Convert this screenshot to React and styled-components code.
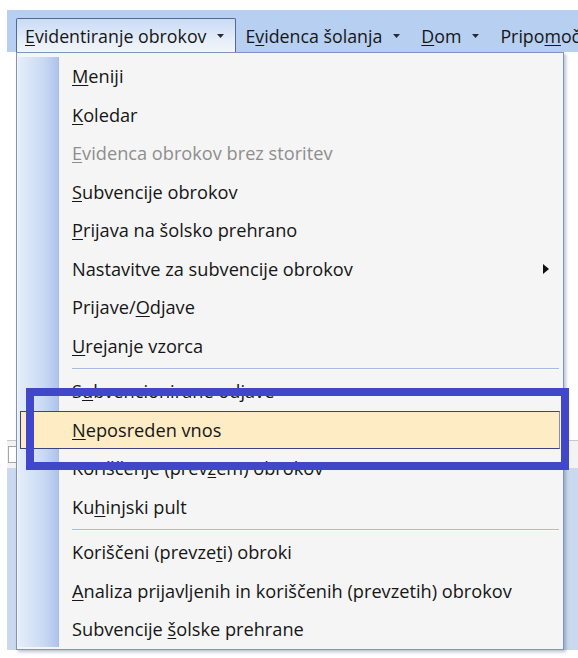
import React from 'react';
import styled, { createGlobalStyle, css } from 'styled-components';

const GlobalStyle = createGlobalStyle`
  html, body {
    margin: 0;
    background: #ffffff;
  }
  body {
    font-family: "Open Sans", "Noto Sans", "DejaVu Sans", sans-serif;
  }
`;

const Screen = styled.div`
  position: relative;
  width: 578px;
  height: 658px;
  overflow: hidden;
  background: #ffffff;
`;

const AppWindow = styled.div`
  display: flex;
  flex-direction: column;
  height: 640px;
  margin: 10px 0 0 7px;
`;

const MenuBar = styled.div`
  display: flex;
  align-items: flex-end;
  height: 42px;
  padding-left: 9px;
  background: #b7cff1;
  white-space: nowrap;
  overflow: hidden;
`;

const BarItem = styled.div`
  position: relative;
  flex-shrink: 0;
  display: flex;
  align-items: center;
  gap: 11px;
  height: 32px;
  padding: 0 11px 0 8px;
  border: 1px solid transparent;
  border-bottom: none;
  font-size: 17.8px;
  color: #161616;

  ${({ $open }) =>
    $open &&
    css`
      z-index: 3;
      height: 34px;
      margin-bottom: -1px;
      border-color: #56698f;
      border-radius: 2px 2px 0 0;
      background: linear-gradient(#c9dbf5, #e9f0fa 70%, #f5f5f5);
    `}
`;

const Key = styled.span`
  text-decoration: underline;
  text-underline-offset: 2px;
  text-decoration-thickness: 1px;
`;

const DownArrow = styled.svg`
  width: 7px;
  height: 4px;
  fill: #2a2a2a;
`;

const Workspace = styled.div`
  flex: 1;
  display: flex;
  flex-direction: column;
  background: #ffffff;
`;

const Toolbar = styled.div`
  display: flex;
  align-items: center;
  height: 27px;
  margin-top: auto;
  border-top: 1px solid #c8c8c8;
  background: #f3f3f3;
`;

const SearchBox = styled.div`
  width: 60px;
  height: 15px;
  margin-left: 1px;
  border: 1px solid #a6a6a6;
  background: #ffffff;
`;

const Panel = styled.div`
  height: 182px;
  background: #cad9ee;
`;

const Dropdown = styled.div`
  position: absolute;
  left: 16px;
  top: 52px;
  z-index: 2;
  box-sizing: border-box;
  width: 548px;
  height: 598px;
  padding: 4px 0 0;
  border: 1px solid #7f93bf;
  box-shadow: 2px 2px 3px rgba(70, 80, 100, 0.35);
  background:
    linear-gradient(to right, #e5edf9 0, #c9d9f4 26px, #aec4ec 40px, #9fb8e6 41px)
      1px 4px / 41px calc(100% - 6px) no-repeat,
    #f5f5f5;
`;

const MenuItem = styled.div`
  display: flex;
  align-items: center;
  box-sizing: border-box;
  height: 38.5px;
  margin: 0 3px;
  padding: 0 10px 0 51px;
  border: 1px solid transparent;
  font-size: 18.2px;
  white-space: nowrap;
  color: ${({ $disabled }) => ($disabled ? '#8e8e8e' : '#161616')};

  ${({ $active }) =>
    $active &&
    css`
      background: #feecc5;
      border-color: #3c4282 #8c8ca4 #3c4282 #3c4282;
    `}
`;

const SubArrow = styled.svg`
  width: 6px;
  height: 10px;
  margin-left: auto;
  fill: #111111;
`;

const Separator = styled.div`
  display: flex;
  align-items: center;
  height: 7px;
  margin: 0 4px 0 55px;

  &::before {
    content: '';
    flex: 1;
    height: 1px;
    background: #a3bbe5;
    border-bottom: 1px solid #fbfbfb;
  }
`;

const Callout = styled.div`
  position: absolute;
  left: 26px;
  top: 388px;
  z-index: 4;
  box-sizing: border-box;
  width: 543px;
  height: 82px;
  border: 8px solid #4048c9;
`;

// label with an access key: [before, key, after]
const Label = ({ parts }) => (
  <span>
    {parts[0]}
    {parts[1] && <Key>{parts[1]}</Key>}
    {parts[2]}
  </span>
);

const barMenus = [
  { parts: ['', 'E', 'videntiranje obrokov'], open: true, arrow: true },
  { parts: ['E', 'v', 'idenca šolanja'], arrow: true },
  { parts: ['', 'D', 'om'], arrow: true },
  { parts: ['Pripo', 'm', 'očki'] },
];

const menuGroups = [
  [
    { parts: ['', 'M', 'eniji'] },
    { parts: ['', 'K', 'oledar'] },
    { parts: ['', 'E', 'videnca obrokov brez storitev'], disabled: true },
    { parts: ['', 'S', 'ubvencije obrokov'] },
    { parts: ['', 'P', 'rijava na šolsko prehrano'] },
    { parts: ['Nastavitve za subvencije obrokov'], submenu: true },
    { parts: ['Prijave/', 'O', 'djave'] },
    { parts: ['', 'U', 'rejanje vzorca'] },
  ],
  [
    { parts: ['S', 'u', 'bvencionirane odjave'] },
    { parts: ['', 'N', 'eposreden vnos'], active: true },
    { parts: ['Koriščenje (prev', 'z', 'em) obrokov'] },
    { parts: ['Ku', 'h', 'injski pult'] },
  ],
  [
    { parts: ['Koriščeni (prevze', 't', 'i) obroki'] },
    { parts: ['', 'A', 'naliza prijavljenih in koriščenih (prevzetih) obrokov'] },
    { parts: ['Subvencije ', 'š', 'olske prehrane'] },
  ],
];

const App = () => {
  return (
    <Screen>
      <GlobalStyle />
      <AppWindow>
        <MenuBar>
          {barMenus.map((m, i) => (
            <BarItem key={i} $open={m.open}>
              <Label parts={m.parts} />
              {m.arrow && (
                <DownArrow viewBox="0 0 7 4">
                  <path d="M0 0h7L3.5 4z" />
                </DownArrow>
              )}
            </BarItem>
          ))}
        </MenuBar>
        <Workspace>
          <Toolbar>
            <SearchBox />
          </Toolbar>
          <Panel />
        </Workspace>
      </AppWindow>

      <Dropdown>
        {menuGroups.map((group, g) => (
          <React.Fragment key={g}>
            {g > 0 && <Separator />}
            {group.map((item, i) => (
              <MenuItem key={i} $disabled={item.disabled} $active={item.active}>
                <Label parts={item.parts} />
                {item.submenu && (
                  <SubArrow viewBox="0 0 6 10">
                    <path d="M0 0l6 5-6 5z" />
                  </SubArrow>
                )}
              </MenuItem>
            ))}
          </React.Fragment>
        ))}
      </Dropdown>

      <Callout />
    </Screen>
  );
};

export default App;
